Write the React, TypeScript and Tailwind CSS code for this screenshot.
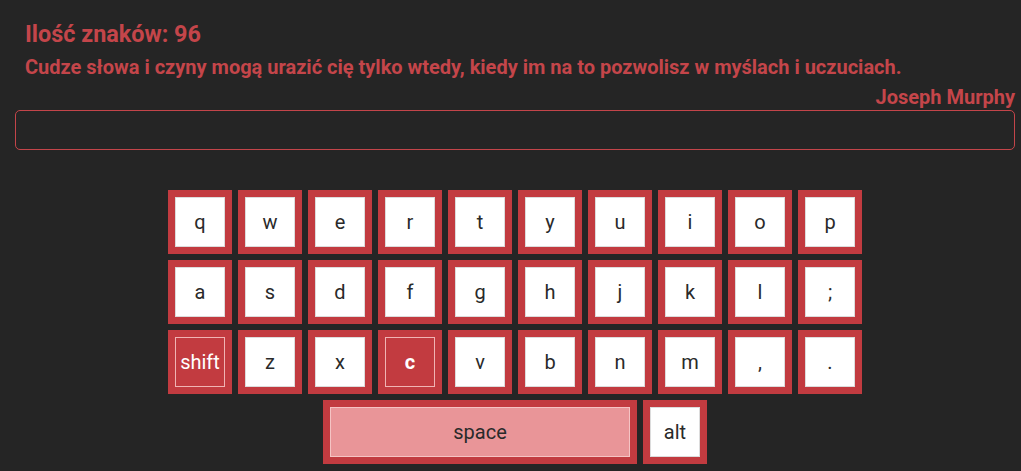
const rows = [
  ["q", "w", "e", "r", "t", "y", "u", "i", "o", "p"],
  ["a", "s", "d", "f", "g", "h", "j", "k", "l", ";"],
  ["shift", "z", "x", "c", "v", "b", "n", "m", ",", "."],
];

function Key({ label, active, wide }: { label: string; active?: boolean; wide?: boolean }) {
  return (
    <div
      className={`flex h-16 items-center justify-center bg-[#c23b40] p-[7px] ${wide ? "w-[314px]" : "w-16"}`}
    >
      <div
        className={`flex h-full w-full items-center justify-center border text-[20px] ${
          wide
            ? "border-[#f5c4c4] bg-[#e99598] text-[#2a2a2a]"
            : active
              ? "border-[#f0b4b4] bg-[#c23b40] text-white"
              : "border-[#dcdcdc] bg-white text-[#2a2a2a]"
        } ${label === "c" ? "font-bold" : ""}`}
      >
        {label}
      </div>
    </div>
  );
}

export default function App() {
  return (
    <div className="min-h-screen bg-[#252525] pl-[15px] pr-[6px] pt-[20px] font-['Roboto',sans-serif]">
      <div className="px-[10px] text-[#c4454a]">
        <h1 className="text-[23.4px] font-bold leading-[28px]">Ilość znaków: 96</h1>
        <p className="mt-[5px] text-[20px] font-bold leading-[28px]">
          Cudze słowa i czyny mogą urazić cię tylko wtedy, kiedy im na to pozwolisz w myślach i uczuciach.
        </p>
      </div>
      <p className="mt-[3px] text-right text-[20px] font-bold leading-[26px] text-[#c4454a]">Joseph Murphy</p>
      <input
        className="h-10 w-full rounded-[5px] border border-[#c4454a] bg-transparent px-3 text-white outline-none"
        type="text"
      />
      <div className="mt-10 flex flex-col items-center gap-[6px]">
        {rows.map((row, i) => (
          <div key={i} className="flex gap-[6px]">
            {row.map((k) => (
              <Key key={k} label={k} active={k === "shift" || k === "c"} />
            ))}
          </div>
        ))}
        <div className="flex gap-[6px]">
          <Key label="space" wide />
          <Key label="alt" />
        </div>
      </div>
    </div>
  );
}
